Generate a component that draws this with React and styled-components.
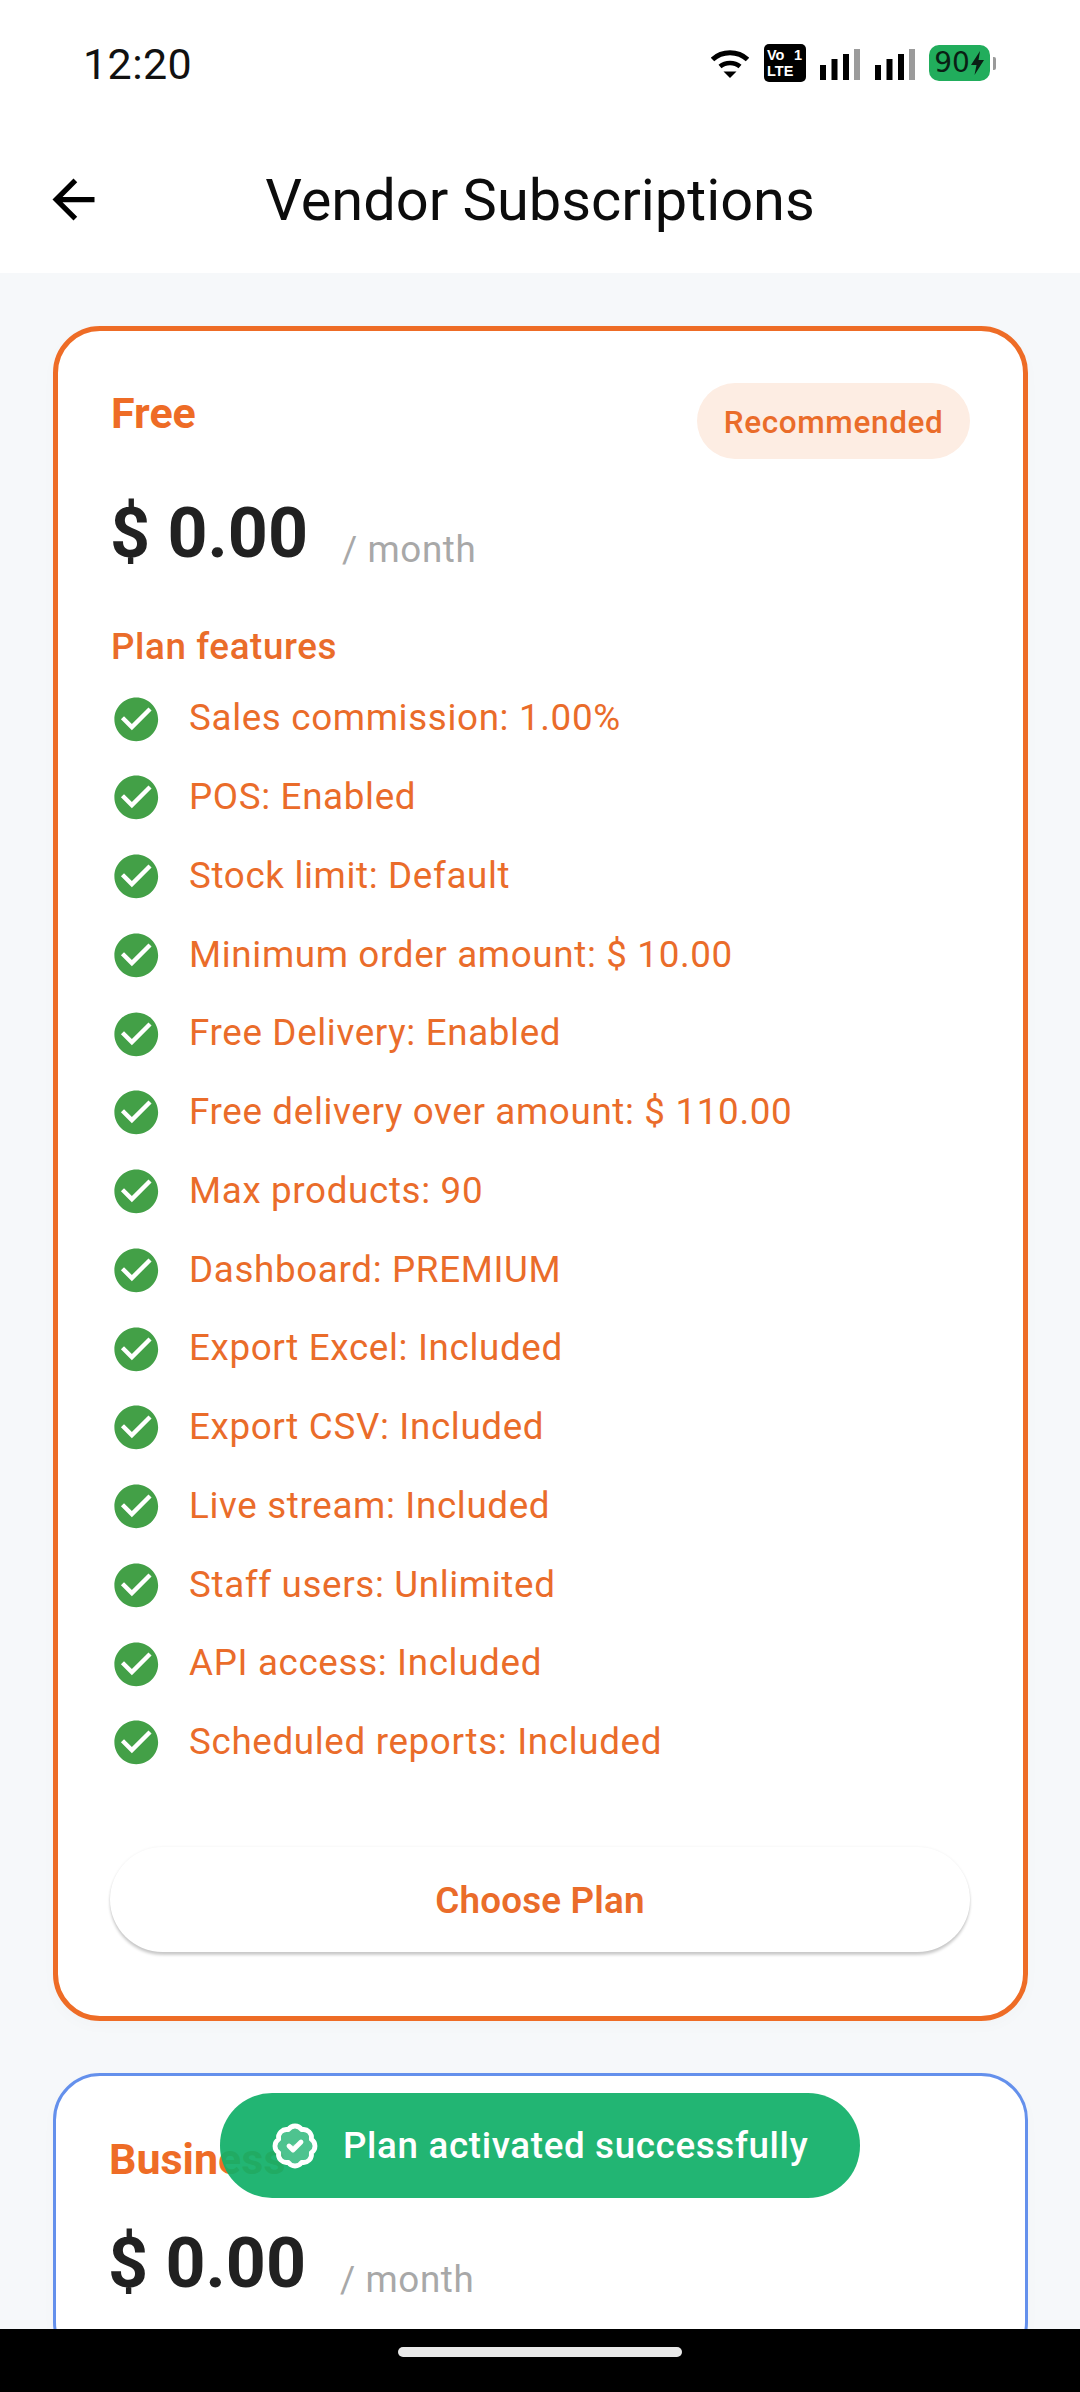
import React from 'react';
import styled, { createGlobalStyle } from 'styled-components';
import { MdArrowBack, MdCheckCircle } from 'react-icons/md';
import { BadgeCheck } from 'lucide-react';

const Global = createGlobalStyle`
  html, body { margin: 0; padding: 0; background: #fff; }
  * { box-sizing: border-box; }
  body { font-family: Roboto, "Noto Sans", sans-serif; }
`;

const ORANGE = '#ee6c26';
const ORANGE_TEXT = '#ea6c2a';

const Screen = styled.div`
  position: relative;
  width: 1080px;
  height: 2392px;
  display: flex;
  flex-direction: column;
  overflow: hidden;
  background: #f6f8fa;
`;

const Header = styled.header`
  background: #fff;
  flex: none;
`;

const StatusBar = styled.div`
  height: 126px;
  padding: 41px 84px 0 83px;
  display: flex;
  justify-content: space-between;
  align-items: flex-start;
`;

const Time = styled.span`
  font-size: 43px;
  line-height: 46px;
  letter-spacing: 0.4px;
  color: #111;
`;

const StatusIcons = styled.div`
  display: flex;
  align-items: center;
  height: 38px;
  margin-top: 3px;
`;

const WifiIcon = styled.svg`
  width: 38px;
  height: 29px;
  margin: 1px 15px 0 0;
`;

const VoLte = styled.div`
  width: 42px;
  height: 38px;
  background: #000;
  border-radius: 5px;
  color: #fff;
  font: 700 14.5px/16px "Liberation Sans", sans-serif;
  padding: 3px 3px;
  margin-right: 14px;
`;

const VoRow = styled.div`
  display: flex;
  justify-content: space-between;
  padding-right: 1px;
`;

const SignalIcon = styled.svg`
  width: 40px;
  height: 31px;
  margin: 3px 15px 0 0;
  &:last-of-type { margin-right: 14px; }
`;

const Battery = styled.div`
  width: 61px;
  height: 36px;
  background: #21ad5c;
  border-radius: 10px;
  display: flex;
  align-items: center;
  justify-content: center;
  color: #0a1f14;
  font: 400 28px/36px "DejaVu Sans", sans-serif;
`;

const BatteryNub = styled.div`
  width: 3px;
  height: 13px;
  margin-left: 3px;
  background: #9a9a9a;
  border-radius: 0 2px 2px 0;
`;

const Toolbar = styled.div`
  position: relative;
  height: 147px;
  display: flex;
  align-items: center;
  justify-content: center;
`;

const BackButton = styled.div`
  position: absolute;
  left: 42px;
  top: 42px;
  width: 63px;
  height: 63px;
  font-size: 63px;
  line-height: 0;
  color: #000;
`;

const Title = styled.h1`
  margin: 0;
  font-size: 57.75px;
  line-height: 66px;
  font-weight: 400;
  color: #0c0c0c;
`;

const Content = styled.main`
  flex: 1;
  min-height: 0;
  overflow: hidden;
  padding: 52.5px 52.5px 0;
  display: flex;
  flex-direction: column;
  gap: 52.5px;
`;

const Card = styled.section`
  flex: none;
  background: #fff;
  border-radius: 47px;
  border: ${p => (p.$active ? `5.25px solid ${ORANGE}` : '3px solid #6490ec')};
  padding: 52.5px 52.5px 63px;
  box-shadow: 0 5px 16px rgba(0, 0, 0, 0.02);
`;

const CardTop = styled.div`
  display: flex;
  justify-content: space-between;
  align-items: flex-start;
`;

const PlanName = styled.h2`
  margin: 0;
  padding: 1px 0 0 1px;
  font-size: 43px;
  line-height: 59px;
  font-weight: 700;
  color: ${ORANGE};
`;

const Badge = styled.span`
  height: 76px;
  padding: 2px 26.5px 0;
  border-radius: 38px;
  background: #fdede3;
  color: ${ORANGE_TEXT};
  font-size: 31.5px;
  font-weight: 500;
  letter-spacing: 0.65px;
  display: flex;
  align-items: center;
`;

const PriceRow = styled.div`
  margin-top: 34px;
  display: flex;
  align-items: flex-end;
  gap: 34px;
`;

const Price = styled.span`
  font-size: 69.9px;
  line-height: 80px;
  font-weight: 700;
  color: #212121;
`;

const Period = styled.span`
  font-size: 36.75px;
  line-height: 43px;
  letter-spacing: 0.6px;
  color: #a8a8a8;
  margin-bottom: 2px;
`;

const FeaturesLabel = styled.h3`
  margin: 51.5px 0 0;
  padding-left: 1px;
  font-size: 36.75px;
  line-height: 43px;
  font-weight: 500;
  letter-spacing: 0.6px;
  color: ${ORANGE_TEXT};
`;

const FeatureList = styled.ul`
  list-style: none;
  margin: 25px 0 0;
  padding: 0;
  display: flex;
  flex-direction: column;
  gap: 26.25px;
`;

const Feature = styled.li`
  height: 52.5px;
  display: flex;
  align-items: center;
  gap: 26.5px;
  color: ${ORANGE_TEXT};
  font-size: 36.75px;
  letter-spacing: 0.66px;
`;

const FeatureText = styled.span`
  margin-top: -2px;
`;

const FeatureIcon = styled(MdCheckCircle)`
  flex: none;
  width: 52.5px;
  height: 52.5px;
  color: #43a047;
`;

const ChooseButton = styled.button`
  display: block;
  width: 100%;
  height: 105px;
  margin: 78px 0 1px;
  padding: 3px 0 0;
  border: none;
  border-radius: 53px;
  background: #fff;
  color: ${ORANGE_TEXT};
  font: 600 36.75px Roboto, sans-serif;
  letter-spacing: 0.2px;
  box-shadow: 0 3px 3px rgba(0, 0, 0, 0.2), 0 0 3px rgba(0, 0, 0, 0.06);
`;

const Toast = styled.div`
  position: absolute;
  left: 220px;
  top: 2093px;
  width: 640px;
  height: 105px;
  border-radius: 52px;
  background: rgba(17, 175, 104, 0.93);
  display: flex;
  align-items: center;
  gap: 24px;
  padding-left: 51px;
  color: #fff;
  font-size: 36.75px;
  font-weight: 500;
  letter-spacing: 0.65px;
`;

const ToastIcon = styled(BadgeCheck)`
  flex: none;
  width: 48px;
  height: 48px;
  fill: rgba(255, 255, 255, 0.2);
`;

const NavBar = styled.div`
  flex: none;
  height: 63px;
  background: #000;
  display: flex;
  justify-content: center;
  padding-top: 18px;
`;

const HomeIndicator = styled.div`
  width: 284px;
  height: 10px;
  border-radius: 5px;
  background: #e9e9e9;
`;

const Signal = () => (
  <SignalIcon viewBox="0 0 40 31">
    <rect x="0" y="16" width="6" height="15" fill="#000" />
    <rect x="11.5" y="10" width="6" height="21" fill="#000" />
    <rect x="23" y="5" width="6" height="26" fill="#000" />
    <rect x="34" y="0" width="6" height="31" fill="#9b9b9b" />
  </SignalIcon>
);

const features = [
  'Sales commission: 1.00%',
  'POS: Enabled',
  'Stock limit: Default',
  'Minimum order amount: $ 10.00',
  'Free Delivery: Enabled',
  'Free delivery over amount: $ 110.00',
  'Max products: 90',
  'Dashboard: PREMIUM',
  'Export Excel: Included',
  'Export CSV: Included',
  'Live stream: Included',
  'Staff users: Unlimited',
  'API access: Included',
  'Scheduled reports: Included',
];

export default function App() {
  return (
    <Screen>
      <Global />
      <Header>
        <StatusBar>
          <Time>12:20</Time>
          <StatusIcons>
            <WifiIcon viewBox="0 0 38 29">
              <path d="M1.500 10.500C11 1.500 27 1.500 36.500 10.500" fill="none" stroke="#000" strokeWidth="5" />
              <path d="M9 17.500C14.500 12.800 23.500 12.800 29 17.500" fill="none" stroke="#000" strokeWidth="4.600" />
              <path d="M12.500 22.500L25.500 22.500L19 29Z" fill="#000" />
            </WifiIcon>
            <VoLte>
              <VoRow><span>Vo</span><span>1</span></VoRow>
              <div>LTE</div>
            </VoLte>
            <Signal />
            <Signal />
            <Battery>
              90
              <svg width="15" height="24" viewBox="0 0 15 24">
                <path d="M10 0L1 14H6.500L4.500 24L14 9H8.500Z" fill="#0a1f14" />
              </svg>
            </Battery>
            <BatteryNub />
          </StatusIcons>
        </StatusBar>
        <Toolbar>
          <BackButton><MdArrowBack /></BackButton>
          <Title>Vendor Subscriptions</Title>
        </Toolbar>
      </Header>
      <Content>
        <Card $active>
          <CardTop>
            <PlanName>Free</PlanName>
            <Badge>Recommended</Badge>
          </CardTop>
          <PriceRow>
            <Price>$ 0.00</Price>
            <Period>/ month</Period>
          </PriceRow>
          <FeaturesLabel>Plan features</FeaturesLabel>
          <FeatureList>
            {features.map(f => (
              <Feature key={f}><FeatureIcon /><FeatureText>{f}</FeatureText></Feature>
            ))}
          </FeatureList>
          <ChooseButton>Choose Plan</ChooseButton>
        </Card>
        <Card>
          <CardTop>
            <PlanName>Business</PlanName>
          </CardTop>
          <PriceRow>
            <Price>$ 0.00</Price>
            <Period>/ month</Period>
          </PriceRow>
        </Card>
      </Content>
      <NavBar><HomeIndicator /></NavBar>
      <Toast>
        <ToastIcon strokeWidth={2.4} />
        Plan activated successfully
      </Toast>
    </Screen>
  );
}
